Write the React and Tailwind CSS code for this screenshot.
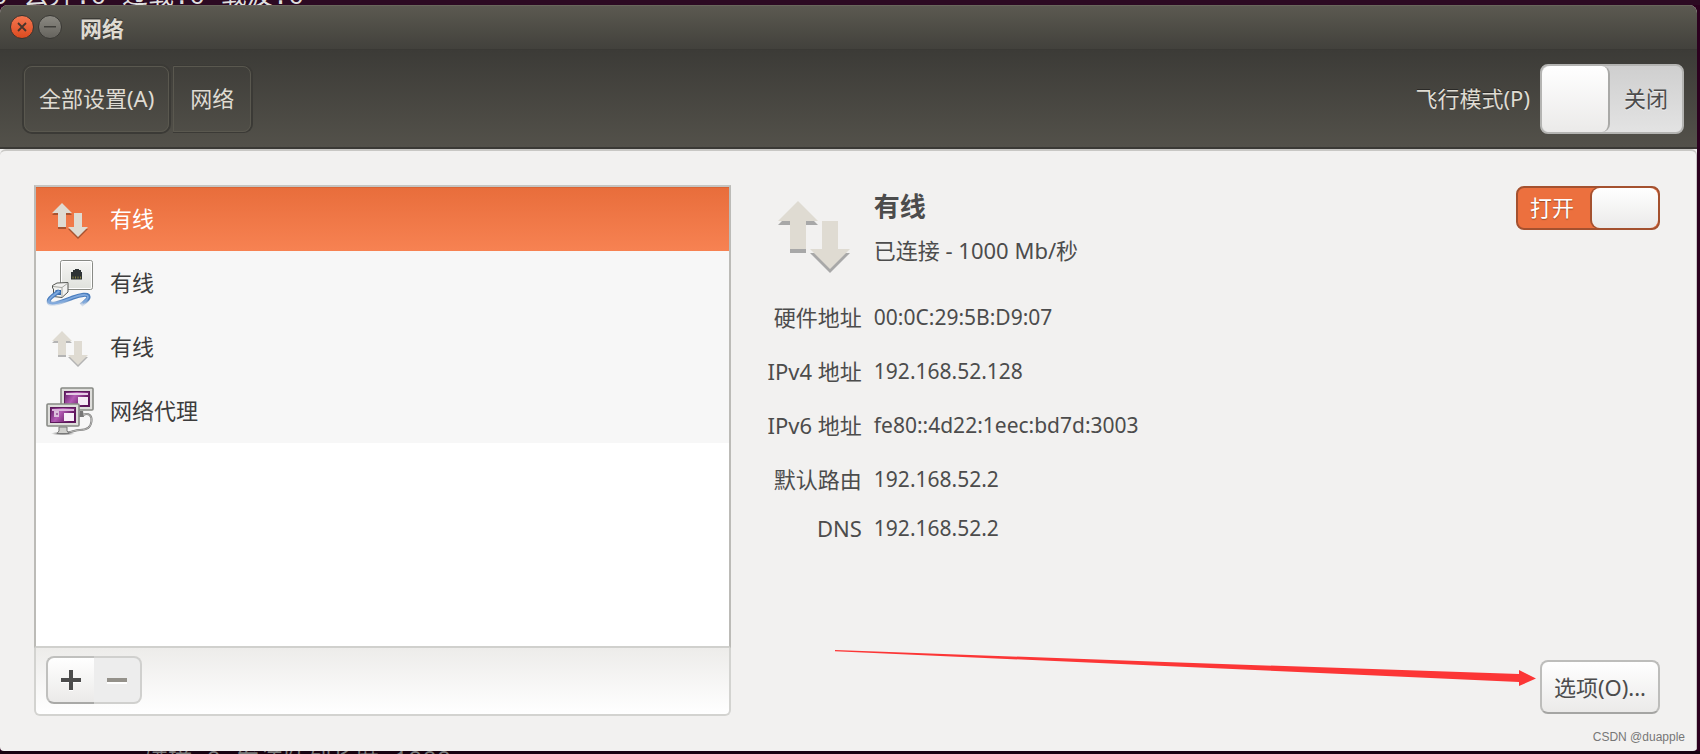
import { useState } from "react";

const connections = [
  { id: 1, name: "有线", icon: "arrows" },
  { id: 2, name: "有线", icon: "wired" },
  { id: 3, name: "有线", icon: "arrows" },
  { id: 4, name: "网络代理", icon: "proxy" },
];

const details = [
  { label: "硬件地址", value: "00:0C:29:5B:D9:07" },
  { label: "IPv4 地址", value: "192.168.52.128" },
  { label: "IPv6 地址", value: "fe80::4d22:1eec:bd7d:3003" },
  { label: "默认路由", value: "192.168.52.2" },
  { label: "DNS", value: "192.168.52.2" },
];

// Up / down traffic arrows
const ArrowsIcon = ({ shadow = "#a8a8a8", ...props }) => (
  <svg viewBox="0 0 48 48" aria-hidden="true" {...props}>
    <g fill={shadow} transform="translate(0 2)">
      <path d="M16 8L26 18H20V32H12V18H6Z" />
      <path d="M28 18H36V32H42L32 42L22 32H28Z" />
    </g>
    <g fill="#dfdbd2">
      <path d="M16 8L26 18H20V32H12V18H6Z" />
      <path d="M28 18H36V32H42L32 42L22 32H28Z" />
    </g>
  </svg>
);

// Wall socket with a blue patch cable
const WiredIcon = (props) => (
  <svg viewBox="0 0 48 48" fill="none" aria-hidden="true" {...props}>
    <defs>
      <linearGradient id="plate" x1="0" y1="0" x2="0" y2="1">
        <stop offset="0" stopColor="#f6f6f4" />
        <stop offset="1" stopColor="#dfe1dc" />
      </linearGradient>
      <linearGradient id="tail" x1="0" y1="0" x2="0" y2="1">
        <stop offset="0.6" stopColor="#4a7dbd" />
        <stop offset="1" stopColor="#4a7dbd" stopOpacity="0.2" />
      </linearGradient>
    </defs>
    <rect x="14.5" y="1.5" width="32" height="29" rx="2" fill="url(#plate)" stroke="#888a85" />
    <rect x="15.5" y="2.5" width="30" height="27" rx="1" stroke="#fff" />
    <path d="M25 13H27V11H29V10H33V11H35V13H36V20.500H25Z" fill="#2e3436" />
    <path d="M27 17.500V19.500M29.500 17.500V19.500M32 17.500V19.500M34.500 17.500V19.500" stroke="#8b8741" />
    <path d="M6.500 26.500L11 24L22 23.500V33L16 38.500L7.500 37.500V30L6.500 29Z" fill="#f2f2f0" stroke="#555753" />
    <path d="M7 27.500L16 28.500L22 24M16 28.500V38" stroke="#a4a6a1" />
    <path d="M9.500 31H15V36H9.500Z" fill="#3465a4" />
    <path
      d="M13.500 32C9 35.500 3 38.500 2.800 42C2.500 48.500 18 42 27 38.500C34 36 42.500 34 42.500 38C42.500 41 38 43.500 35 46"
      stroke="url(#tail)"
      strokeWidth="4.200"
    />
    <path
      d="M13.500 32C9 35.500 3 38.500 2.800 42C2.500 48 18 42 27 38.500C34 36 42 34.500 42 38C42 40 39 42 37 44"
      stroke="#7fa9de"
      strokeWidth="1.800"
    />
  </svg>
);

// Two linked monitors
const ProxyIcon = (props) => (
  <svg viewBox="0 0 48 48" fill="none" aria-hidden="true" {...props}>
    <defs>
      <linearGradient id="screen" x1="0" y1="0" x2="1" y2="0.4">
        <stop offset="0" stopColor="#5e1a63" />
        <stop offset="0.45" stopColor="#b45cb5" />
        <stop offset="1" stopColor="#5c0f58" />
      </linearGradient>
      <radialGradient id="ground">
        <stop offset="0.3" stopColor="#555" stopOpacity="0.7" />
        <stop offset="1" stopColor="#555" stopOpacity="0" />
      </radialGradient>
    </defs>
    <path d="M34 24H37L38 30H33Z" fill="#777" />
    <path d="M37 28C43 25 46 29 45.500 34C45 40 41 43 34 43C28 43 25 46 20 45" stroke="#777" strokeWidth="2" />
    <path d="M37 28C43 25 46 29 45.500 34C45 40 41 43 34 43C28 43 25 46 20 45" stroke="#d8d8d6" strokeWidth="0.700" />
    <rect x="15" y="1" width="32" height="22" rx="1" fill="#dededb" stroke="#888a85" strokeWidth="1.600" />
    <rect x="18.500" y="4.500" width="25" height="15" fill="url(#screen)" stroke="#5c1a5a" />
    <rect x="20" y="6" width="22" height="2" fill="#e5cbe5" />
    <rect x="32" y="10" width="10" height="8" fill="#f5ebf5" />
    <ellipse cx="17" cy="46.500" rx="12" ry="2" fill="url(#ground)" />
    <path d="M13 40H21V44L23 46.500H11L13 44Z" fill="#cfcfcc" stroke="#777" />
    <rect x="1" y="17" width="32" height="22" rx="1" fill="#dededb" stroke="#888a85" strokeWidth="1.600" />
    <rect x="4.500" y="20.500" width="25" height="15" fill="url(#screen)" stroke="#5c1a5a" />
    <rect x="6" y="22" width="22" height="2" fill="#d9b3d9" />
    <rect x="8" y="24" width="5" height="6" fill="#dcc0dc" />
    <rect x="10" y="26" width="2" height="2" fill="#a56aa5" />
    <rect x="18" y="26" width="10" height="8" fill="#f8f0f8" />
  </svg>
);

function ConnectionIcon({ type, active }) {
  if (type === "wired") return <WiredIcon className="size-12 shrink-0" />;
  if (type === "proxy") return <ProxyIcon className="size-12 shrink-0" />;
  return <ArrowsIcon className="size-12 shrink-0" shadow={active ? "#a75431" : "#b4b4b4"} />;
}

function TitleBar() {
  return (
    <header className="flex h-[45px] items-center border-b border-[#3a3935] bg-linear-to-b from-[#5c5a51] to-[#42413c] px-2.5 shadow-[inset_0_1px_0_#69675c]">
      <button
        aria-label="关闭窗口"
        className="flex size-6 items-center justify-center rounded-full border border-[#3a3530] bg-linear-to-b from-[#f4764f] to-[#dd4a1d]"
      >
        <svg viewBox="0 0 10 10" className="size-2.5" stroke="#47352c" strokeWidth="1.800">
          <path d="M1 1L9 9M9 1L1 9" />
        </svg>
      </button>
      <button
        aria-label="最小化"
        className="ml-1 flex size-6 items-center justify-center rounded-full border border-[#3a3935] bg-linear-to-b from-[#8b8982] to-[#66645e]"
      >
        <svg viewBox="0 0 12 2" className="h-0.5 w-3">
          <rect width="12" height="1.500" fill="#3f3e3a" />
        </svg>
      </button>
      <h1 className="ml-[18px] pt-0.5 text-[22px] leading-8 font-bold text-[#dfdbd2] text-shadow-[0_-1px_0_#2b2a27]">网络</h1>
    </header>
  );
}

function Toolbar() {
  const [airplane, setAirplane] = useState(false);

  return (
    <div className="flex h-[99px] items-center justify-between border-b-2 border-[#3a3935] bg-linear-to-b from-[#3c3b37] to-[#53514a] pr-[13px] pl-6 text-[22px] text-[#dfdbd2]">
      <nav className="flex gap-1 text-shadow-[0_-1px_0_#2b2a27]">
        <button className="h-[66px] rounded-lg border border-[#5a584f] px-3.5 shadow-[0_0_0_2px_#3b3a36]">
          全部设置(A)
        </button>
        <button className="h-[66px] rounded-r-lg border border-[#5a584f] px-4 shadow-[1px_0_0_1px_#3b3a36]">
          网络
        </button>
      </nav>

      <label className="flex items-center gap-2.5">
        <span className="text-shadow-[0_-1px_0_#2b2a27]">飞行模式(P)</span>
        <input
          type="checkbox"
          role="switch"
          className="peer sr-only"
          checked={airplane}
          onChange={(e) => setAirplane(e.target.checked)}
        />
        <span className="flex h-[70px] w-36 items-center rounded-lg border-2 border-[#b4b4b2] bg-linear-to-b from-[#cfcfcf] to-[#e3e3e3] text-[#4c4c4c] peer-checked:flex-row-reverse">
          <span className="h-full w-[68px] rounded-lg border-r-2 border-[#a9a9a7] bg-linear-to-b from-white to-[#ebeae9]"></span>
          <span className="flex-1 text-center text-shadow-[0_1px_0_#f0f0f0]">{airplane ? "打开" : "关闭"}</span>
        </span>
      </label>
    </div>
  );
}

function ConnectionList({ selected, onSelect }) {
  return (
    <section className="flex flex-col">
      <ul className="flex-1 border-2 border-[#bcbbb7] border-t-[#c6c5c2] border-b-[#d0d0cd] bg-white">
        {connections.map((item) => (
          <li key={item.id}>
            <button
              onClick={() => onSelect(item.id)}
              className={
                item.id === selected
                  ? "flex h-16 w-full items-center gap-4 bg-linear-to-b from-[#e86d3b] to-[#f78252] pl-2.5 text-left text-[22px] text-white shadow-[inset_0_1px_0_#d96535]"
                  : "flex h-16 w-full items-center gap-4 bg-[#f7f7f7] pl-2.5 text-left text-[22px] text-[#3c3c3c]"
              }
            >
              <ConnectionIcon type={item.icon} active={item.id === selected} />
              <span className="pb-0.5">{item.name}</span>
            </button>
          </li>
        ))}
      </ul>

      <div className="flex h-[68px] items-start rounded-b-md border-2 border-t-0 border-[#d3d3d0] bg-linear-to-b from-[#edecea] to-white px-2.5 pt-2">
        <button
          aria-label="添加"
          className="flex h-12 w-12 items-center justify-center rounded-l-lg border-2 border-r-0 border-[#c0c0be] border-b-[#a9a9a7] bg-linear-to-b from-white to-[#ebeae9]"
        >
          <svg viewBox="0 0 20 22" className="h-[22px] w-5">
            <path d="M8 2H12V10H20V14H12V22H8V14H0V10H8Z" fill="#fff" />
            <path d="M8 1H12V9H20V13H12V21H8V13H0V9H8Z" fill="#4c4c4c" />
          </svg>
        </button>
        <button
          aria-label="删除"
          disabled
          className="flex h-12 w-12 items-center justify-center rounded-r-lg border-2 border-l-0 border-[#d0d0ce] bg-[#ededed]"
        >
          <svg viewBox="0 0 20 22" className="h-[22px] w-5">
            <rect y="11" width="20" height="4" fill="#fff" />
            <rect y="9" width="20" height="4" fill="#94918a" />
          </svg>
        </button>
      </div>
    </section>
  );
}

function ConnectionDetails() {
  const [enabled, setEnabled] = useState(true);

  return (
    <section className="flex flex-col text-[22px] text-[#4c4c4c]">
      <div className="flex items-start gap-3">
        <div className="flex w-[131px] shrink-0 justify-end">
          <ArrowsIcon className="size-24" />
        </div>
        <div className="flex-1 pt-[3px]">
          <h2 className="text-[26px] leading-9 font-bold">有线</h2>
          <p className="mt-2.5 leading-8">已连接 - 1000 Mb/秒</p>
        </div>
        <label className="mt-px">
          <input
            type="checkbox"
            role="switch"
            aria-label="有线"
            className="peer sr-only"
            checked={enabled}
            onChange={(e) => setEnabled(e.target.checked)}
          />
          <span className="flex h-11 w-36 flex-row-reverse items-center rounded-lg border-2 border-[#b4b4b2] bg-[#d8d8d8] peer-checked:flex-row peer-checked:border-[#a4512f] peer-checked:bg-[#ec703e] peer-checked:text-white">
            <span className="flex-1 pr-1.5 pb-0.5 text-center text-shadow-[0_1px_1px_#9d4a28]">
              {enabled ? "打开" : "关闭"}
            </span>
            <span className="h-full w-[66px] rounded-lg bg-linear-to-b from-white to-[#ebeae9] shadow-[-1px_0_0_1px_#a4512f]"></span>
          </span>
        </label>
      </div>

      <dl className="mt-5 flex flex-col gap-[22px]">
        {details.map((row) => (
          <div key={row.label} className="flex gap-3 leading-8 last:leading-[22px]">
            <dt className="w-[131px] shrink-0 text-right">{row.label}</dt>
            <dd className="text-[21px]">{row.value}</dd>
          </div>
        ))}
      </dl>

      <div className="mt-auto mb-0.5 flex justify-end">
        <button className="h-[54px] rounded-lg border-2 border-[#bdbdbb] border-b-[#a5a5a3] bg-linear-to-b from-white to-[#ebeae9] px-3">
          选项(O)...
        </button>
      </div>
    </section>
  );
}

export default function App() {
  const [selected, setSelected] = useState(1);

  return (
    <div className="relative flex min-h-screen flex-col bg-[#2c001e] font-['Noto_Sans','Noto_Sans_CJK_SC',sans-serif]">
      {/* Terminal behind the window */}
      <div className="flex h-[5px] items-end overflow-hidden bg-[#2c0a22] font-['Liberation_Mono','Noto_Sans_CJK_SC',monospace] text-[26px] leading-7 whitespace-pre text-[#dedede]">
        <span className="-mb-1.5 -ml-2">0 丢弃:0 过载:0 载波:0</span>
      </div>

      <main className="mr-[3px] flex flex-1 flex-col overflow-hidden rounded-t-lg rounded-b-sm bg-[#f2f1f0]">
        <TitleBar />
        <Toolbar />
        <div className="grid flex-1 grid-cols-[3fr_4fr] rounded-t-md border-t-2 border-r border-[#c8c7c4] pt-[34px] pr-9 pb-[35px] pl-[34px]">
          <ConnectionList selected={selected} onSelect={setSelected} />
          <ConnectionDetails />
        </div>
      </main>

      <div className="flex h-[3px] items-start overflow-hidden bg-[#180210] pl-36 font-['Liberation_Mono','Noto_Sans_CJK_SC',monospace] text-[24px] leading-6 whitespace-pre text-[#777777]">
        <span className="-mt-0.5">碰撞:0 发送队列长度:1000</span>
      </div>

      {/* Red pointer towards the options button */}
      <svg
        viewBox="0 0 701 37"
        className="pointer-events-none absolute right-[164px] bottom-[67px] h-[37px] w-[701px]"
        fill="#fc3636"
        aria-hidden="true"
      >
        <path d="M0 0L330 12L684 24V20L701 28.500L684 36V32L330 16L0 1.300Z" />
      </svg>
      <p className="pointer-events-none absolute right-[15px] bottom-[9px] font-['Liberation_Sans',sans-serif] text-[12px] leading-4 text-[#777777]">
        CSDN @duapple
      </p>
    </div>
  );
}
